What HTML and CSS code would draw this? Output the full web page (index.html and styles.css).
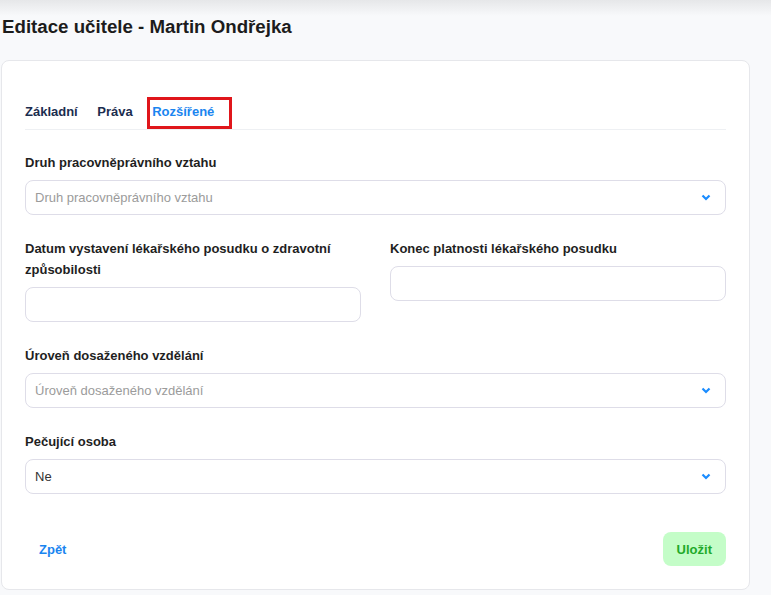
FILE: index.html
```html
<!DOCTYPE html>
<html lang="cs">
  <head>
    <meta charset="utf-8" />
    <title>Editace učitele</title>
    <link rel="stylesheet" href="styles.css">
  </head>

  <body>
    <div class="page">
      <h1 class="page-title">Editace učitele - Martin Ondřejka</h1>

      <div class="card">
        <!-- Tabs -->
        <nav class="tabs">
          <a class="tab">Základní</a>
          <a class="tab">Práva</a>
          <a class="tab tab-active">Rozšířené</a>
        </nav>

        <div class="field">
          <label class="field-label">Druh pracovněprávního vztahu</label>
          <div class="select">
            <span class="placeholder">Druh pracovněprávního vztahu</span>
            <svg class="chevron" width="10" height="7" viewBox="0 0 10 7"><path d="M1.5 1.5 L5 5 L8.5 1.5" fill="none" stroke="#1a8cff" stroke-width="2.2"/></svg>
          </div>
        </div>

        <div class="field-row">
          <div class="field">
            <label class="field-label">Datum vystavení lékařského posudku o zdravotní způsobilosti</label>
            <div class="input"></div>
          </div>
          <div class="field">
            <label class="field-label">Konec platnosti lékařského posudku</label>
            <div class="input"></div>
          </div>
        </div>

        <div class="field">
          <label class="field-label">Úroveň dosaženého vzdělání</label>
          <div class="select">
            <span class="placeholder">Úroveň dosaženého vzdělání</span>
            <svg class="chevron" width="10" height="7" viewBox="0 0 10 7"><path d="M1.5 1.5 L5 5 L8.5 1.5" fill="none" stroke="#1a8cff" stroke-width="2.2"/></svg>
          </div>
        </div>

        <div class="field">
          <label class="field-label">Pečující osoba</label>
          <div class="select">
            <span class="value">Ne</span>
            <svg class="chevron" width="10" height="7" viewBox="0 0 10 7"><path d="M1.5 1.5 L5 5 L8.5 1.5" fill="none" stroke="#1a8cff" stroke-width="2.2"/></svg>
          </div>
        </div>

        <div class="actions">
          <button type="button" class="btn btn-back">Zpět</button>
          <button type="button" class="btn btn-save">Uložit</button>
        </div>
      </div>
    </div>
  </body>
</html>
```

FILE: styles.css
```css
body {
  margin: 0;
  font-family: "Liberation Sans", Arial, sans-serif;
  background: linear-gradient(#e6e7e9 0, #f8f9fb 16px) no-repeat, #f8f9fb;
  color: #222;
}
.page {
  padding: 0 21px 4px 1px;
}
.page-title {
  margin: 0;
  padding: 15px 0 0 1px;
  font-size: 18.7px;
  line-height: 24px;
  font-weight: bold;
  color: #1c1c1c;
}
.card {
  margin-top: 21px;
  background: #fff;
  border: 1px solid #e6e7eb;
  border-radius: 8px;
  padding: 41px 23px 23px;
}
.tabs {
  display: flex;
  gap: 19.5px;
  padding-bottom: 8px;
  border-bottom: 1px solid #eef0f3;
  margin-bottom: 22px;
}
.tab {
  position: relative;
  font-size: 13px;
  line-height: 19px;
  font-weight: bold;
  color: #1b2d4f;
}
.tab-active {
  color: #1a85f0;
}
.tab-active::after {
  content: "";
  position: absolute;
  left: -5px;
  right: -18px;
  top: -5px;
  bottom: -8px;
  border: 3px solid #e0161b;
}
.field {
  margin-bottom: 23px;
}
.field-label {
  display: block;
  font-size: 13px;
  line-height: 21px;
  font-weight: bold;
  margin-bottom: 7px;
  color: #1f1f1f;
}
.select,
.input {
  box-sizing: border-box;
  height: 35px;
  border: 1px solid #dedde8;
  border-radius: 8px;
  background: #fff;
  display: flex;
  align-items: center;
  padding: 0 14px 0 9px;
  font-size: 13px;
}
.select {
  justify-content: space-between;
}
.placeholder {
  color: #9b9b9b;
}
.value {
  color: #333;
}
.chevron {
  display: block;
}
.field-row {
  display: grid;
  grid-template-columns: 1fr 1fr;
  gap: 29px;
}
.actions {
  display: flex;
  justify-content: space-between;
  margin-top: 38px;
}
.btn {
  border: none;
  border-radius: 8px;
  height: 34px;
  padding: 0 14px;
  font-family: inherit;
  font-size: 13px;
  font-weight: bold;
  cursor: pointer;
}
.btn-back {
  background: none;
  color: #1a85f0;
}
.btn-save {
  background: #c4fdc8;
  color: #1faa2a;
}
```
